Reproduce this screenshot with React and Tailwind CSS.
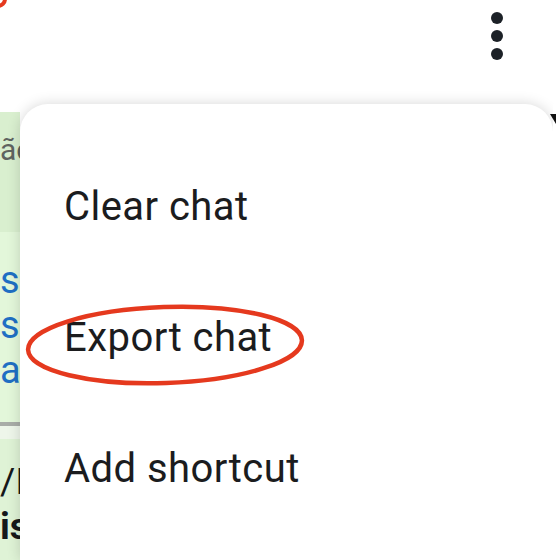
import React from 'react';

const menuItems = ['Clear chat', 'Export chat', 'Add shortcut'];

function MoreIcon() {
  return (
    <svg width="14" height="50" viewBox="0 0 14 50" className="mt-[11px] mr-[52px]">
      <circle cx="7" cy="7" r="6" fill="#1c2127" />
      <circle cx="7" cy="25" r="6" fill="#1c2127" />
      <circle cx="7" cy="43" r="6" fill="#1c2127" />
    </svg>
  );
}

export default function App() {
  return (
    <div
      className="relative w-[556px] h-[560px] overflow-hidden bg-white flex flex-col"
      style={{ fontFamily: 'Roboto, "Noto Sans", sans-serif' }}
    >
      {/* stray annotation mark */}
      <svg width="10" height="10" className="absolute left-0 top-0">
        <circle cx="-2" cy="-1" r="7" fill="none" stroke="#e5391e" strokeWidth="4" />
      </svg>

      {/* Toolbar */}
      <div className="h-[104px] shrink-0 flex justify-end items-start bg-white">
        <MoreIcon />
      </div>

      <div className="flex-1 flex min-h-0">
        {/* chat peeking out behind the menu */}
        <div className="w-[20px] shrink-0 flex flex-col overflow-hidden">
          <div className="h-[8px] bg-white" />
          <div className="h-[120px] bg-[#d9efcf] text-[30px] leading-[34px] text-[#5f6360] pt-[21px] whitespace-nowrap">
            ãc
          </div>
          <div className="h-[190px] bg-[#e3f7da] text-[38px] leading-[45px] text-[#1f6fc4] pt-[26px] whitespace-nowrap tracking-[-1px]">
            <div>s</div>
            <div>s</div>
            <div>ap</div>
          </div>
          <div className="h-[4px] bg-[#a9ada8]" />
          <div className="h-[13px] bg-[#eef6ea]" />
          <div className="flex-1 bg-[#dff3d6] text-[37px] leading-[45px] text-[#15181a] pt-[20px] whitespace-nowrap">
            <div>/I</div>
            <div className="font-bold">is</div>
          </div>
        </div>

        {/* Overflow menu */}
        <div className="flex-1 bg-white rounded-t-[28px] shadow-[0_0_14px_rgba(0,0,0,0.16)] pt-[37px] relative">
          {menuItems.map((item) => (
            <div
              key={item}
              className="h-[131px] flex items-center pl-[44px] text-[40px] text-[#1b1c1e] tracking-[0.45px]"
            >
              {item}
            </div>
          ))}
        </div>
        <div className="w-[3px] shrink-0 bg-white relative">
          <div className="absolute top-[10px] right-0 w-0 h-0 border-t-[10px] border-t-[#111] border-l-[6px] border-l-transparent" />
        </div>
      </div>

      {/* red annotation ellipse */}
      <svg width="290" height="92" className="absolute left-[20px] top-[299px] pointer-events-none">
        <ellipse
          cx="145"
          cy="46"
          rx="137"
          ry="38"
          fill="none"
          stroke="#e5391e"
          strokeWidth="4.5"
          transform="rotate(-2 145 46)"
        />
      </svg>
    </div>
  );
}
